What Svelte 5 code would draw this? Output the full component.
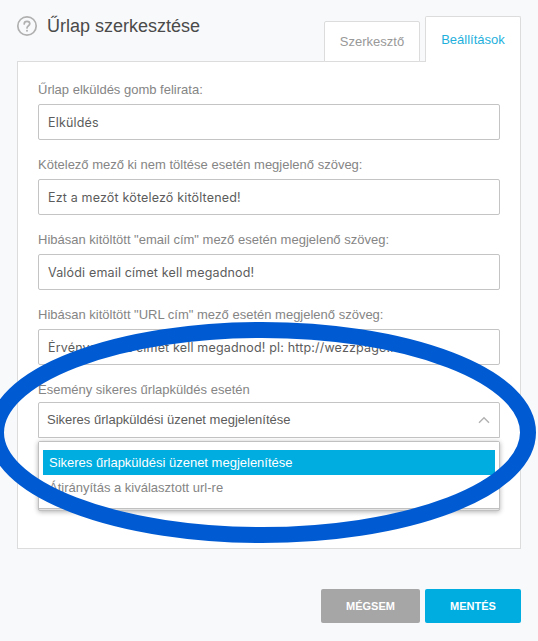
<script>
  const tabs = ['Szerkesztő', 'Beállítások'];
  const events = ['Sikeres űrlapküldési üzenet megjelenítése', 'Átirányítás a kiválasztott url-re'];

  let activeTab = $state('Beállítások');
  let selected = $state(events[0]);
  let isOpen = $state(true);

  let fields = $state([
    { id: 'submit-label', label: 'Űrlap elküldés gomb felirata:', value: 'Elküldés' },
    { id: 'required-text', label: 'Kötelező mező ki nem töltése esetén megjelenő szöveg:', value: 'Ezt a mezőt kötelező kitöltened!' },
    { id: 'email-text', label: 'Hibásan kitöltött "email cím" mező esetén megjelenő szöveg:', value: 'Valódi email címet kell megadnod!' },
    { id: 'url-text', label: 'Hibásan kitöltött "URL cím" mező esetén megjelenő szöveg:', value: 'Érvényes URL címet kell megadnod! pl: http://wezzpage.hu' }
  ]);

  function choose(event) {
    selected = event;
    isOpen = false;
  }
</script>

<div class="dialog">
  <header>
    <svg class="help" width="22" height="22" viewBox="0 0 22 22" fill="none" stroke="currentColor" stroke-linecap="round">
      <circle cx="11" cy="11" r="9.2" stroke-width="1.7" />
      <path d="M8.2 8.9C8.2 7.3 9.4 6.3 11 6.3S13.8 7.3 13.8 8.8C13.8 10.7 11 10.8 11 13" stroke-width="1.7" />
      <path d="M11 15.7v.1" stroke-width="2" />
    </svg>
    <h1>Űrlap szerkesztése</h1>
    <div class="tabs" role="tablist">
      {#each tabs as tab}
        <button
          class="tab"
          class:active={activeTab === tab}
          role="tab"
          aria-selected={activeTab === tab}
          onclick={() => activeTab = tab}
        >{tab}</button>
      {/each}
    </div>
  </header>

  <section class="panel">
    {#each fields as field}
      <div class="field">
        <label for={field.id}>{field.label}</label>
        <input id={field.id} type="text" bind:value={field.value} spellcheck="false" />
      </div>
    {/each}

    <div class="field select-field">
      <label for="event-select">Esemény sikeres űrlapküldés esetén</label>
      <button id="event-select" class="select" aria-expanded={isOpen} onclick={() => isOpen = !isOpen}>
        {selected}
        <svg class="chevron" class:closed={!isOpen} width="12" height="8" viewBox="0 0 12 8" fill="none" stroke="currentColor" stroke-width="1.4">
          <path d="M1 6.7L6 1.7L11 6.7" />
        </svg>
      </button>
      {#if isOpen}
        <div class="dropdown">
          <ul role="listbox">
            {#each events as event}
              <li role="option" aria-selected={selected === event}>
                <button class="option" class:highlighted={selected === event} onclick={() => choose(event)}>{event}</button>
              </li>
            {/each}
          </ul>
        </div>
      {/if}
    </div>
  </section>

  <footer>
    <button class="action cancel">MÉGSEM</button>
    <button class="action save">MENTÉS</button>
  </footer>

  <svg class="marker" width="538" height="641" viewBox="0 0 538 641" fill="none" aria-hidden="true">
    <ellipse cx="262" cy="432.5" rx="266" ry="102.5" stroke="#005bd3" stroke-width="16" />
  </svg>
</div>

<style>
  :global(body) {
    background: #f8f9fb;
  }

  .dialog {
    position: relative;
    box-sizing: border-box;
    width: 538px;
    height: 641px;
    padding: 16px 17px 0;
    overflow: hidden;
    background: #f8f9fb;
    color: #858585;
    font-family: 'Liberation Sans', Arial, sans-serif;
    font-size: 13px;
  }

  * {
    box-sizing: border-box;
  }

  button,
  input {
    margin: 0;
    font-family: inherit;
    font-size: inherit;
  }

  header {
    display: flex;
    align-items: flex-start;
    height: 46px;
    margin-bottom: -1px;
  }

  .help {
    margin-left: -1px;
    margin-top: -1px;
    color: #b0b0b0;
  }

  h1 {
    margin: 0 0 0 9px;
    color: #4a4a4a;
    font-size: 18px;
    font-weight: 400;
    line-height: 20px;
  }

  .tabs {
    display: flex;
    align-items: flex-end;
    gap: 5px;
    height: 46px;
    margin-left: auto;
  }

  .tab {
    position: relative;
    width: 96px;
    height: 41px;
    padding: 0;
    border: 1px solid #dcdcdc;
    border-radius: 2px 2px 0 0;
    background: #fff;
    color: #999;
  }

  .tab.active {
    z-index: 1;
    height: 46px;
    border-bottom: 0;
    color: #1fb0dc;
  }

  .panel {
    width: 504px;
    height: 488px;
    padding: 20px;
    border: 1px solid #dcdcdc;
    background: #fff;
  }

  .field {
    display: flex;
    flex-direction: column;
    height: 75px;
  }

  label {
    height: 22px;
    line-height: 16px;
  }

  input {
    height: 36px;
    padding: 0 9px;
    border: 1px solid #c4c4c4;
    border-radius: 2px;
    background: #fff;
    color: #5c5c5c;
    font-family: Inter, sans-serif;
    font-size: 12.5px;
    letter-spacing: 0.17px;
    outline: none;
  }

  .select-field {
    position: relative;
  }

  .select-field label {
    height: 20px;
  }

  .select {
    display: flex;
    align-items: center;
    justify-content: space-between;
    height: 36px;
    padding: 0 9px 2px 8px;
    border: 1px solid #c4c4c4;
    border-radius: 2px 2px 0 0;
    background: #fff;
    color: #5c5c5c;
    text-align: left;
  }

  .chevron {
    margin-top: 2px;
    color: #b0b0b0;
  }

  .chevron.closed {
    transform: rotate(180deg);
  }

  .dropdown {
    position: absolute;
    top: 59px;
    left: 0;
    width: 100%;
    height: 70px;
    padding-bottom: 1px;
    border: 1px solid #c0c0c0;
    border-radius: 2px;
    background: #e4e4e4;
    box-shadow: 0 1px 5px rgba(0, 0, 0, 0.3);
  }

  ul {
    height: 67px;
    margin: 0;
    padding: 8px 4px;
    border-bottom: 1px solid #c0c0c0;
    background: #fff;
    list-style: none;
  }

  .option {
    display: block;
    width: 100%;
    height: 25px;
    padding: 0 6px;
    border: 0;
    background: transparent;
    color: #858585;
    text-align: left;
  }

  .option.highlighted {
    background: #00ade0;
    color: #fff;
  }

  footer {
    display: flex;
    justify-content: flex-end;
    gap: 5px;
    margin-top: 40px;
  }

  .action {
    height: 34px;
    padding: 0;
    border: 0;
    border-radius: 2px;
    color: #fff;
    font-size: 11px;
    font-weight: 700;
  }

  .cancel {
    width: 99px;
    background: #a6a6a6;
  }

  .save {
    width: 96px;
    background: #00ade0;
  }

  /* ring drawn around the event selector */
  .marker {
    position: absolute;
    top: 0;
    left: 0;
    pointer-events: none;
  }
</style>
